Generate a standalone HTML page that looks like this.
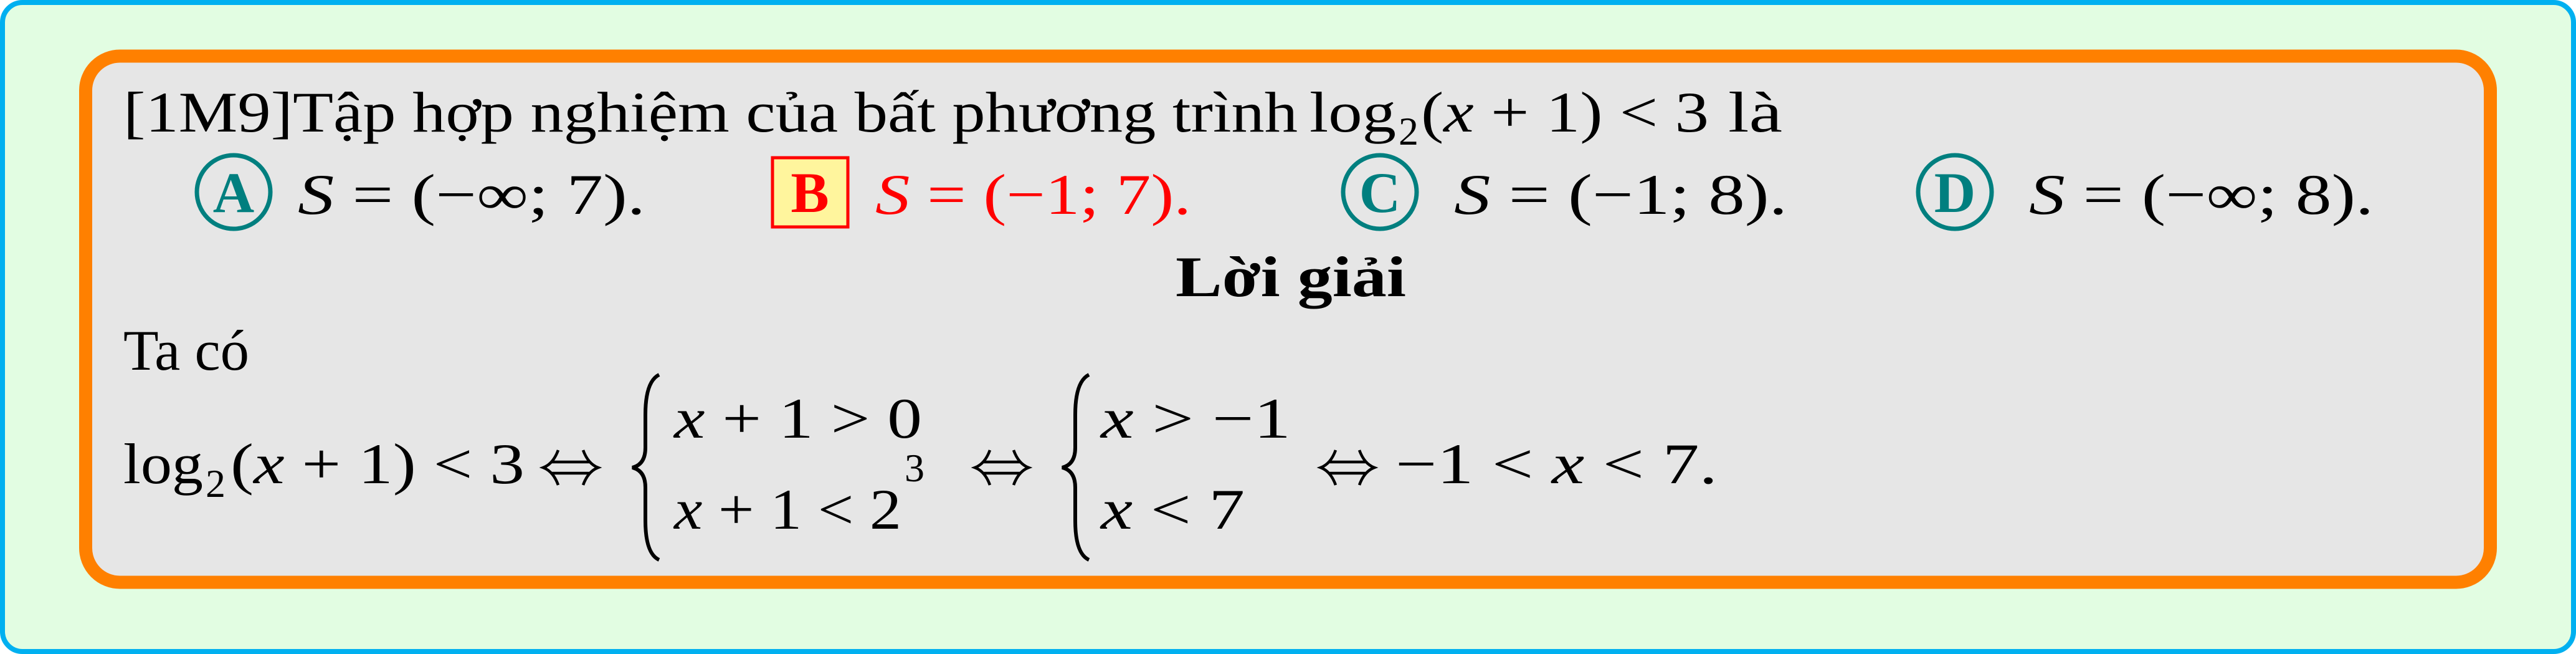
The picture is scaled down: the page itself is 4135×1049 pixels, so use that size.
<!DOCTYPE html>
<html><head><meta charset="utf-8">
<style>
html,body{margin:0;padding:0;background:#fff;}
svg{display:block;}
text{font-family:"Liberation Serif","DejaVu Serif",serif;font-size:92px;fill:#000;}
.i{font-style:italic;}
.b{font-weight:bold;}
.ar{fill:none;stroke:#000;stroke-width:4.5;}
</style></head><body>
<svg width="4135" height="1049" viewBox="0 0 4135 1049" xmlns="http://www.w3.org/2000/svg">
<rect x="4" y="4" width="4127" height="1041" rx="32" fill="#e2fde2" stroke="#00b0f0" stroke-width="8"/>
<rect x="137.5" y="90" width="3860" height="844" rx="55" fill="#e6e6e6" stroke="#ff8000" stroke-width="21"/>

<text x="198" y="211" textLength="1885" lengthAdjust="spacingAndGlyphs">[1M9]Tập hợp nghiệm của bất phương trình</text>
<text x="2102" y="211" textLength="139" lengthAdjust="spacingAndGlyphs">log</text>
<text x="2245" y="232" style="font-size:64px">2</text>
<text x="2281" y="211" textLength="462" lengthAdjust="spacingAndGlyphs">(<tspan class="i">x</tspan> + 1) &lt; 3</text>
<text x="2774" y="211" textLength="87" lengthAdjust="spacingAndGlyphs">là</text>

<circle cx="375" cy="308" r="59" fill="none" stroke="#007f7f" stroke-width="7"/>
<text x="375" y="340" text-anchor="middle" class="b" style="fill:#007f7f">A</text>
<text x="478" y="343" textLength="558" lengthAdjust="spacingAndGlyphs"><tspan class="i">S</tspan> = (−∞; 7).</text>

<rect x="1240" y="253" width="121" height="111" fill="#fff59d" stroke="#f00" stroke-width="5"/>
<text x="1300" y="340" text-anchor="middle" class="b" style="fill:#f00">B</text>
<text x="1405" y="343" textLength="507" lengthAdjust="spacingAndGlyphs" style="fill:#f00"><tspan class="i">S</tspan> = (−1; 7).</text>

<circle cx="2215" cy="308" r="59" fill="none" stroke="#007f7f" stroke-width="7"/>
<text x="2215" y="340" text-anchor="middle" class="b" style="fill:#007f7f">C</text>
<text x="2334" y="343" textLength="535" lengthAdjust="spacingAndGlyphs"><tspan class="i">S</tspan> = (−1; 8).</text>

<circle cx="3138" cy="308" r="59" fill="none" stroke="#007f7f" stroke-width="7"/>
<text x="3138" y="340" text-anchor="middle" class="b" style="fill:#007f7f">D</text>
<text x="3257" y="343" textLength="553" lengthAdjust="spacingAndGlyphs"><tspan class="i">S</tspan> = (−∞; 8).</text>

<text x="1887" y="475" class="b" textLength="370" lengthAdjust="spacingAndGlyphs">Lời giải</text>
<text x="198" y="593" textLength="202" lengthAdjust="spacingAndGlyphs">Ta có</text>

<text x="198" y="775" textLength="128" lengthAdjust="spacingAndGlyphs">log</text>
<text x="330" y="797" style="font-size:64px">2</text>
<text x="370" y="775" textLength="472" lengthAdjust="spacingAndGlyphs">(<tspan class="i">x</tspan> + 1) &lt; 3</text>
<g class="ar">
<path d="M886 741 H946 M886 759 H946 M896 722 Q888 744 872 750 Q888 756 896 778 M936 722 Q944 744 960 750 Q944 756 936 778"/>
<path d="M1579 741 H1637 M1579 759 H1637 M1589 722 Q1581 744 1565 750 Q1581 756 1589 778 M1627 722 Q1635 744 1651 750 Q1635 756 1627 778"/>
<path d="M2134 741 H2192 M2134 759 H2192 M2144 722 Q2136 744 2120 750 Q2136 756 2144 778 M2182 722 Q2190 744 2206 750 Q2190 756 2182 778"/>
</g>
<path d="M1058 601 Q1036 612 1036 665 L1036 718 Q1036 745 1015 750 Q1036 755 1036 782 L1036 835 Q1036 888 1058 898" fill="none" stroke="#000" stroke-width="6"/>
<text x="1082" y="702" textLength="398" lengthAdjust="spacingAndGlyphs"><tspan class="i">x</tspan> + 1 &gt; 0</text>
<text x="1082" y="848" textLength="365" lengthAdjust="spacingAndGlyphs"><tspan class="i">x</tspan> + 1 &lt; 2</text>
<text x="1452" y="772" style="font-size:64px">3</text>
<path d="M1748 601 Q1726 612 1726 665 L1726 718 Q1726 745 1705 750 Q1726 755 1726 782 L1726 835 Q1726 888 1748 898" fill="none" stroke="#000" stroke-width="6"/>
<text x="1767" y="702" textLength="305" lengthAdjust="spacingAndGlyphs"><tspan class="i">x</tspan> &gt; −1</text>
<text x="1767" y="848" textLength="231" lengthAdjust="spacingAndGlyphs"><tspan class="i">x</tspan> &lt; 7</text>
<text x="2240" y="775" textLength="517" lengthAdjust="spacingAndGlyphs">−1 &lt; <tspan class="i">x</tspan> &lt; 7.</text>
</svg>
</body></html>
